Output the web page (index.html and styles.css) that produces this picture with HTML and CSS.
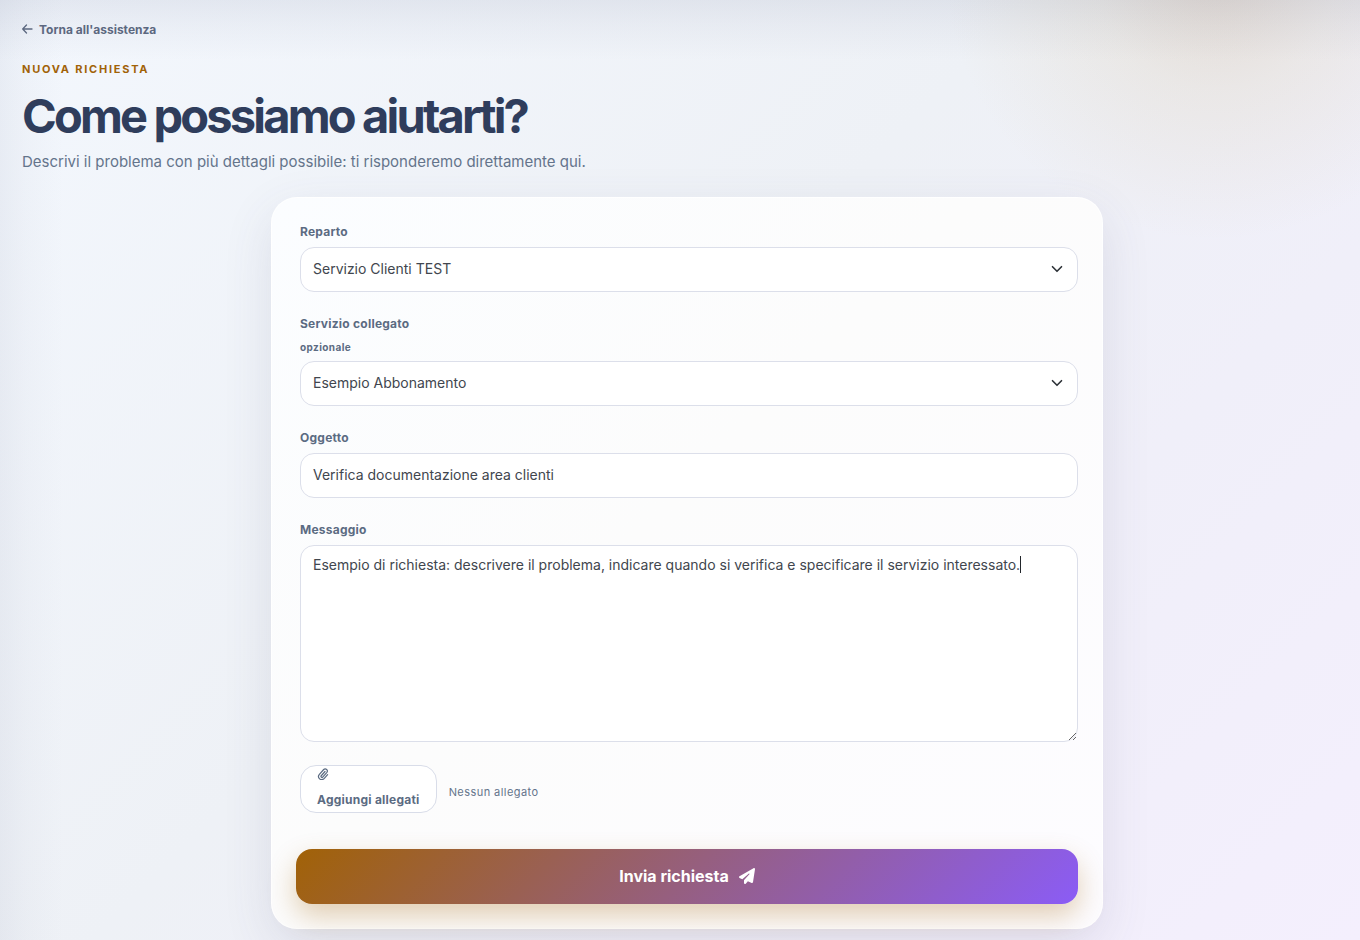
FILE: index.html
```html
<!DOCTYPE html>
<html lang="it">
<head>
    <meta charset="utf-8">
    <meta name="viewport" content="width=device-width, initial-scale=1">
    <title>Nuova richiesta</title>
    <link rel="stylesheet" href="styles.css">
</head>
<body>
    <main class="page">
      <header class="intro">
        <a class="back" href="#">
          <svg width="12" height="12" viewBox="0 0 12 12" fill="none" stroke="currentColor" stroke-width="1.3" stroke-linecap="round" stroke-linejoin="round" aria-hidden="true"><path d="M10 5H.700M4.500 1 .700 5l3.800 4"/></svg>
          Torna all'assistenza
        </a>
        <p class="eyebrow">Nuova richiesta</p>
        <h1>Come possiamo aiutarti?</h1>
        <p class="lead">Descrivi il problema con più dettagli possibile: ti risponderemo direttamente qui.</p>
      </header>

      <form class="card">
        <div class="field">
          <label for="reparto">Reparto</label>
          <div class="select">
            <select id="reparto">
              <option>Servizio Clienti TEST</option>
            </select>
            <svg class="chevron" width="16" height="12" viewBox="0 0 16 16" fill="none" stroke="currentColor" stroke-width="2.200" stroke-linecap="round" stroke-linejoin="round" aria-hidden="true"><path d="m2 5 6 6 6-6"/></svg>
          </div>
        </div>

        <div class="field">
          <label for="servizio">Servizio collegato <small>opzionale</small></label>
          <div class="select">
            <select id="servizio">
              <option>Esempio Abbonamento</option>
            </select>
            <svg class="chevron" width="16" height="12" viewBox="0 0 16 16" fill="none" stroke="currentColor" stroke-width="2.200" stroke-linecap="round" stroke-linejoin="round" aria-hidden="true"><path d="m2 5 6 6 6-6"/></svg>
          </div>
        </div>

        <div class="field">
          <label for="oggetto">Oggetto</label>
          <input type="text" id="oggetto" value="Verifica documentazione area clienti">
        </div>

        <div class="field">
          <label for="messaggio">Messaggio</label>
          <div class="message">
            <textarea id="messaggio" spellcheck="false">Esempio di richiesta: descrivere il problema, indicare quando si verifica e specificare il servizio interessato.</textarea>
            <span class="caret"></span>
          </div>
        </div>

        <div class="attachments">
          <button type="button" class="attach">
            <svg width="12" height="12" viewBox="0 0 24 24" fill="none" stroke="currentColor" stroke-width="2.400" stroke-linecap="round" stroke-linejoin="round" aria-hidden="true"><path d="m16 7-7.500 8.500a2 2 0 0 0 3 2.700l8.300-9.500a4.300 4.300 0 0 0-6.400-5.700L4.800 12.800a6.300 6.300 0 0 0 9.400 8.400l7-8"/></svg>
            Aggiungi allegati
          </button>
          <span class="attach-status">Nessun allegato</span>
        </div>

        <button type="submit" class="submit">
          Invia richiesta
          <svg width="16" height="16" viewBox="0 0 512 512" fill="currentColor" aria-hidden="true"><path d="M498.100 5.600c10.100 7 15.400 19.100 13.500 31.200l-64 416c-1.500 9.700-7.400 18.200-16 23s-18.900 5.400-28 1.600L284 427.700l-68.500 74.100c-8.900 9.700-22.900 12.900-35.200 8.100S160 493.200 160 480v-83.600c0-4 1.500-7.800 4.200-10.800L331.800 202.800c5.800-6.300 5.600-16-.4-22s-15.700-6.400-22-.7L106 360.800l-88.300-44.200C7.100 311.300.3 300.700 0 288.900s5.900-22.800 16.100-28.700l448-256c10.700-6.100 23.900-5.500 34 1.400z"/></svg>
        </button>
      </form>
    </main>
</body>
</html>
```
FILE: styles.css
```css
* {
  box-sizing: border-box;
}

body {
  margin: 0;
  min-height: 100vh;
  font-family: Inter, "Liberation Sans", sans-serif;
  color: #41464e;
  background:
    linear-gradient(180deg, rgba(90, 100, 135, 0.10), rgba(90, 100, 135, 0.05) 26px, rgba(90, 100, 135, 0) 60px),
    linear-gradient(90deg, rgba(90, 100, 135, 0.07), rgba(90, 100, 135, 0.03) 26px, rgba(90, 100, 135, 0) 64px),
    radial-gradient(circle 270px at calc(100% - 145px) -30px, rgba(185, 145, 95, 0.24), rgba(205, 180, 130, 0.14) 45%, rgba(205, 190, 150, 0) 100%),
    linear-gradient(135deg, #f3f7fd 0%, #eef1f6 45%, #f0eff9 70%, #f4effd 100%);
}

.page {
  padding: 22px 8px 11px 22px;
}

.back {
  display: flex;
  align-items: center;
  gap: 5px;
  width: max-content;
  font-size: 12px;
  line-height: 16px;
  font-weight: 700;
  color: #5c6880;
  text-decoration: none;
}

.eyebrow {
  margin: 23px 0 0;
  font-size: 11px;
  line-height: 16px;
  font-weight: 700;
  letter-spacing: 0.16em;
  text-transform: uppercase;
  color: #a16207;
}

h1 {
  margin: 14px 0 0;
  font-size: 47px;
  line-height: 50px;
  font-weight: 700;
  letter-spacing: -0.06em;
  color: #2f3d5c;
}

.lead {
  margin: 9px 0 0;
  font-size: 15px;
  line-height: 24px;
  color: #64748b;
}

.card {
  max-width: 832px;
  margin: 23px auto 0;
  padding: 24px;
  border: 1px solid rgba(255, 255, 255, 0.8);
  border-radius: 26px;
  background: linear-gradient(135deg, #fbfdff, #fcfcfc 45%, #fdfcff);
  box-shadow: 0 16px 50px rgba(70, 75, 110, 0.12);
}

.field {
  margin: 0 0 22px 4px;
}

.field label {
  display: grid;
  gap: 6px;
  margin-bottom: 6px;
  font-size: 12px;
  line-height: 19px;
  font-weight: 700;
  letter-spacing: 0.02em;
  color: #5b6b82;
}

.field small {
  font-size: 10px;
  line-height: 16px;
  letter-spacing: 0.04em;
}

.field input,
.field select,
.field textarea {
  display: block;
  width: 100%;
  height: 45px;
  padding: 0 12px 2px;
  border: 1px solid #dcdfea;
  border-radius: 14px;
  background: #fff;
  font: 400 14px/21px Inter, "Liberation Sans", sans-serif;
  color: inherit;
  outline: 0;
}

.field select {
  appearance: none;
}

.field textarea {
  height: 197px;
  padding-top: 8px;
  resize: vertical;
}

.select,
.message {
  position: relative;
}

.chevron {
  position: absolute;
  top: 16px;
  right: 13px;
  color: #2d3238;
  pointer-events: none;
}

/* text cursor at the end of the message */
.caret {
  position: absolute;
  top: 11px;
  left: 720px;
  width: 1px;
  height: 17px;
  background: #22262b;
}

.attachments {
  display: flex;
  align-items: center;
  gap: 12px;
  margin: 23px 0 36px 4px;
}

.attach {
  display: grid;
  align-content: center;
  gap: 10px;
  height: 48px;
  padding: 0 16px;
  border: 1px solid #d9dde9;
  border-radius: 16px;
  background: #fff;
  font: 700 12px/20px Inter, "Liberation Sans", sans-serif;
  letter-spacing: 0.02em;
  color: #5b6b82;
}

.attach-status {
  padding-top: 6px;
  font-size: 11px;
  line-height: 16px;
  letter-spacing: 0.04em;
  color: #64748b;
}

.submit {
  display: flex;
  align-items: center;
  justify-content: center;
  gap: 10px;
  width: 100%;
  height: 55px;
  padding: 0 0 2px;
  border: 0;
  border-radius: 16px;
  background: linear-gradient(135deg, #a16207, #8b5cf6);
  box-shadow: 0 12px 28px rgba(161, 98, 7, 0.30);
  font: 700 16px/24px Inter, "Liberation Sans", sans-serif;
  color: #fff;
}
```
